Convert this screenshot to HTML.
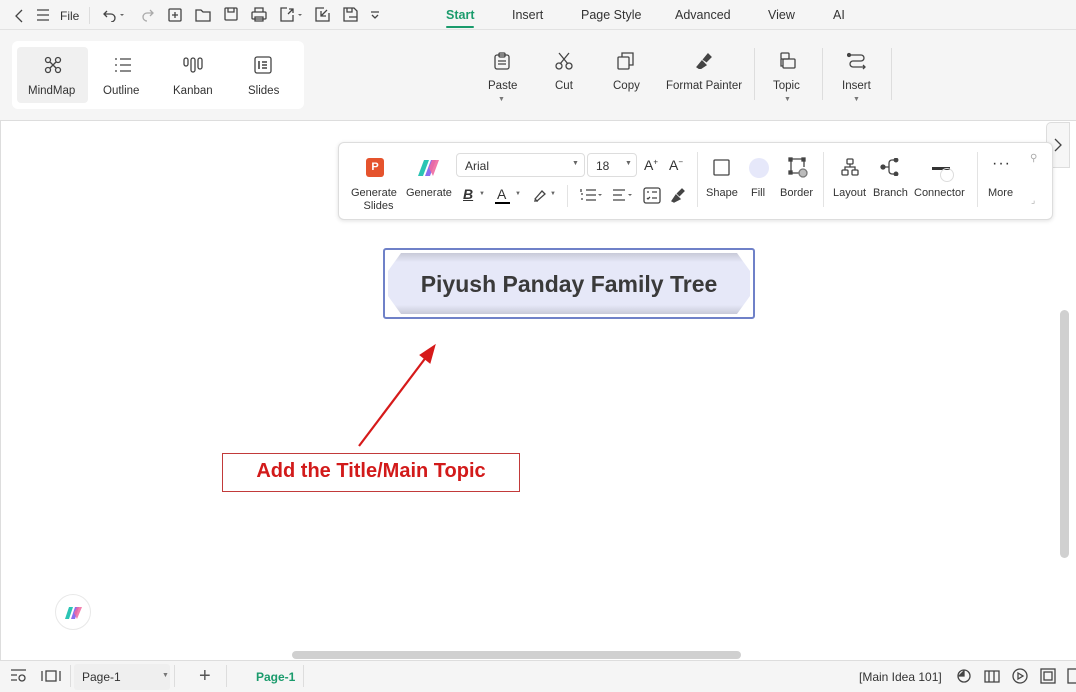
<!DOCTYPE html>
<html><head><meta charset="utf-8"><style>
*{margin:0;padding:0;box-sizing:border-box}
body{width:1076px;height:692px;overflow:hidden;background:#f5f5f5;font-family:"Liberation Sans",sans-serif;color:#333;position:relative;font-size:12px}
.a{position:absolute}
.t{position:absolute;font-size:11.5px;color:#333;white-space:nowrap}
svg{position:absolute;fill:none;stroke:#444;stroke-width:1.3}
.sep{position:absolute;width:1px;background:#ddd}
</style></head><body>
<!-- top bar -->
<div class="a" style="left:0;top:29px;width:1076px;height:1px;background:#e2e2e2"></div>
<svg style="left:12px;top:8px" width="14" height="16"><path d="M10 2L4 8l6 6"/></svg>
<svg style="left:37px;top:9px" width="12" height="12"><path d="M0 1h12M0 6h12M0 11h12"/></svg>
<div class="t" style="left:60px;top:9px;font-size:12px">File</div>
<div class="sep" style="left:89px;top:7px;height:17px"></div>
<svg style="left:103px;top:8px" width="22" height="14"><path d="M4 3L1 6l3 3M1 6h7a4 4 0 010 8" /><path d="M17 6l2 2 2-2" fill="#666" stroke="none"/></svg>
<svg style="left:140px;top:8px" width="14" height="14"><path d="M10 2l3 3-3 3M13 5H7a4 4 0 000 8" stroke="#aaa"/></svg>
<svg style="left:168px;top:8px" width="14" height="14"><rect x="1" y="1" width="12" height="12" rx="1"/><path d="M7 4v6M4 7h6"/></svg>
<svg style="left:195px;top:8px" width="16" height="14"><path d="M1 2h5l2 2h7v9H1z"/></svg>
<svg style="left:224px;top:7px" width="14" height="14"><rect x="1" y="1" width="12" height="12" rx="1"/><path d="M4 1v4h6V1"/></svg>
<svg style="left:251px;top:7px" width="16" height="15"><rect x="1" y="5" width="14" height="7" rx="1"/><path d="M4 5V1h8v4M4 10h8v4H4z"/></svg>
<svg style="left:280px;top:7px" width="26" height="15"><path d="M7 1H1v13h12V8M8 7l5-5M9 2h4v4"/><path d="M18 7l2 2 2-2" fill="#666" stroke="none"/></svg>
<svg style="left:315px;top:7px" width="15" height="15"><path d="M9 1H1v13h13V6M6 4v5h5M6 9l6-6"/></svg>
<svg style="left:343px;top:7px" width="15" height="15"><path d="M1 1h10l3 3v10H1zM4 1v4h5V1M6 10h8"/></svg>
<svg style="left:370px;top:10px" width="10" height="10"><path d="M1 2h8M2 5l3 3 3-3"/></svg>
<div class="t" style="left:446px;top:8px;font-size:12.5px;color:#1a9b6c;font-weight:bold">Start</div>
<div class="a" style="left:446px;top:26px;width:28px;height:2px;background:#1a9b6c;border-radius:1px"></div>
<div class="t" style="left:512px;top:8px;font-size:12.5px">Insert</div>
<div class="t" style="left:581px;top:8px;font-size:12.5px">Page Style</div>
<div class="t" style="left:675px;top:8px;font-size:12.5px">Advanced</div>
<div class="t" style="left:768px;top:8px;font-size:12.5px">View</div>
<div class="t" style="left:833px;top:8px;font-size:12.5px">AI</div>
<!-- view modes -->
<div class="a" style="left:12px;top:41px;width:292px;height:68px;background:#fff;border-radius:6px"></div>
<div class="a" style="left:17px;top:47px;width:71px;height:56px;background:#f0f0f0;border-radius:4px"></div>
<svg style="left:44px;top:56px" width="18" height="18"><circle cx="4" cy="4" r="2.5"/><circle cx="14" cy="4" r="2.5"/><circle cx="4" cy="14" r="2.5"/><circle cx="14" cy="14" r="2.5"/><path d="M6 6l6 6M12 6l-6 6"/></svg>
<div class="t" style="left:28px;top:85px">MindMap</div>
<svg style="left:114px;top:57px" width="18" height="16"><path d="M1 2h2M6 2h11M1 8h2M6 8h11M1 14h2M6 14h11"/></svg>
<div class="t" style="left:103px;top:85px">Outline</div>
<svg style="left:183px;top:57px" width="20" height="16"><rect x="1" y="1" width="4" height="8" rx="2"/><rect x="8" y="1" width="4" height="14" rx="2"/><rect x="15" y="1" width="4" height="11" rx="2"/></svg>
<div class="t" style="left:173px;top:85px">Kanban</div>
<svg style="left:254px;top:56px" width="18" height="18"><rect x="1" y="1" width="16" height="16" rx="2"/><path d="M5 5v8M8 6h5M8 9h5M8 12h5" stroke-width="1.6"/></svg>
<div class="t" style="left:248px;top:85px">Slides</div>
<!-- ribbon -->
<svg style="left:494px;top:52px" width="16" height="18"><rect x="1" y="3" width="14" height="14" rx="2"/><rect x="5" y="1" width="6" height="4" rx="1"/><path d="M4 9h8M4 12h8"/></svg>
<div class="t" style="left:488px;top:80px">Paste</div>
<div class="t" style="left:498px;top:96px;font-size:7px;color:#777">▼</div>
<svg style="left:555px;top:52px" width="18" height="18"><circle cx="4" cy="14" r="3"/><circle cx="14" cy="14" r="3"/><path d="M5 12L14 1M13 12L4 1"/></svg>
<div class="t" style="left:555px;top:80px">Cut</div>
<svg style="left:617px;top:52px" width="18" height="18"><rect x="1" y="5" width="11" height="12" rx="1"/><path d="M5 5V1h11v12h-4"/></svg>
<div class="t" style="left:613px;top:80px">Copy</div>
<svg style="left:694px;top:51px" width="18" height="18"><path d="M3 16l5-6 4 4-6 4zM9 9l5-6 3 3-5 5" fill="#444"/></svg>
<div class="t" style="left:666px;top:80px">Format Painter</div>
<div class="sep" style="left:754px;top:48px;height:52px"></div>
<svg style="left:779px;top:52px" width="18" height="18"><rect x="2" y="1" width="8" height="6" rx="1"/><rect x="4" y="7" width="12" height="9" rx="1"/><path d="M2 7v7h2"/></svg>
<div class="t" style="left:773px;top:80px">Topic</div>
<div class="t" style="left:784px;top:96px;font-size:7px;color:#777">▼</div>
<div class="sep" style="left:822px;top:48px;height:52px"></div>
<svg style="left:847px;top:52px" width="20" height="18"><path d="M2 3h12a3 3 0 010 6H6a3 3 0 000 6h12M16 13l2 2-2 2"/><circle cx="2" cy="3" r="1.5" fill="#444"/></svg>
<div class="t" style="left:842px;top:80px">Insert</div>
<div class="t" style="left:853px;top:96px;font-size:7px;color:#777">▼</div>
<div class="sep" style="left:891px;top:48px;height:52px"></div>
<!-- canvas -->
<div class="a" style="left:0;top:120px;width:1076px;height:540px;background:#fff;border-top:1px solid #ddd;border-left:1px solid #ddd"></div>
<div class="a" style="left:1046px;top:122px;width:24px;height:46px;background:#f6f6f6;border:1px solid #ddd;border-radius:5px 0 0 5px"></div>
<svg style="left:1053px;top:138px" width="10" height="14"><path d="M2 1l6 6-6 6"/></svg>
<div class="a" style="left:1060px;top:310px;width:9px;height:248px;background:#d0d0d0;border-radius:5px"></div>
<div class="a" style="left:292px;top:651px;width:449px;height:8px;background:#d0d0d0;border-radius:4px"></div>
<!-- floating toolbar -->
<div class="a" style="left:338px;top:142px;width:715px;height:78px;background:#fff;border:1px solid #ddd;border-radius:6px;box-shadow:0 1px 4px rgba(0,0,0,.12)"></div>
<div class="a" style="left:366px;top:158px;width:18px;height:19px;background:#e5532d;border-radius:3px;color:#fff;font-weight:bold;font-size:11px;text-align:center;line-height:19px">P</div>
<div class="t" style="left:351px;top:187px;font-size:11px;text-align:center;line-height:13px">Generate<br>&nbsp;&nbsp;&nbsp;Slides</div>
<svg style="left:416px;top:158px;stroke:none" width="26" height="20"><path d="M2 18L8 2h5L7 18z" fill="#2bc4b4"/><path d="M9 18L15 2h5l-6 16z" fill="#8a6ef0"/><path d="M13 10l3-8h7l-6 16z" fill="#f06aa0" opacity=".9"/></svg>
<div class="t" style="left:406px;top:187px;font-size:11px">Generate</div>
<div class="a" style="left:456px;top:153px;width:129px;height:24px;border:1px solid #ddd;border-radius:4px"></div>
<div class="t" style="left:465px;top:159px;font-size:12px">Arial</div>
<div class="t" style="left:572px;top:160px;font-size:7px;color:#666">▼</div>
<div class="a" style="left:587px;top:153px;width:50px;height:24px;border:1px solid #ddd;border-radius:4px"></div>
<div class="t" style="left:596px;top:159px;font-size:12px">18</div>
<div class="t" style="left:625px;top:160px;font-size:7px;color:#666">▼</div>
<div class="t" style="left:644px;top:157px;font-size:14px">A<sup style="font-size:8px">+</sup></div>
<div class="t" style="left:669px;top:157px;font-size:14px">A<sup style="font-size:8px">−</sup></div>
<div class="t" style="left:463px;top:186px;font-size:14px;font-style:italic;font-weight:bold;text-decoration:underline">B</div>
<div class="t" style="left:479px;top:191px;font-size:6px;color:#666">▼</div>
<div class="t" style="left:497px;top:186px;font-size:14px">A</div>
<div class="a" style="left:495px;top:202px;width:15px;height:2px;background:#000"></div>
<div class="t" style="left:515px;top:191px;font-size:6px;color:#666">▼</div>
<svg style="left:532px;top:188px" width="14" height="14"><path d="M3 11l7-8 3 3-8 7zM2 13h4"/></svg>
<div class="t" style="left:550px;top:191px;font-size:6px;color:#666">▼</div>
<div class="sep" style="left:567px;top:185px;height:22px;background:#e3e3e3"></div>
<svg style="left:580px;top:188px" width="22" height="14"><path d="M6 2h10M6 7h10M6 12h10M1 1v3M1 6h2M1 11h2"/><path d="M18 6l2 2 2-2" fill="#666" stroke="none"/></svg>
<svg style="left:612px;top:188px" width="24" height="14"><path d="M1 2h12M1 7h9M1 12h12"/><path d="M16 6l2 2 2-2" fill="#666" stroke="none"/></svg>
<svg style="left:643px;top:187px" width="18" height="17"><rect x="1" y="1" width="16" height="15" rx="2"/><path d="M4 5h2M9 5h5M4 11l1 1 2-2M9 11h5"/></svg>
<svg style="left:670px;top:187px" width="16" height="16"><path d="M2 14l4-6 4 4-6 3zM7 7l5-5 2 2-5 5" fill="#444"/></svg>
<div class="sep" style="left:697px;top:152px;height:55px;background:#e3e3e3"></div>
<svg style="left:712px;top:158px" width="19" height="19"><rect x="2" y="2" width="15" height="15" rx="1"/></svg>
<div class="t" style="left:706px;top:187px;font-size:11px">Shape</div>
<div class="a" style="left:749px;top:158px;width:20px;height:20px;border-radius:50%;background:#e6e8fa"></div>
<div class="t" style="left:751px;top:187px;font-size:11px">Fill</div>
<svg style="left:787px;top:157px" width="22" height="22"><path d="M4 2v14h10M4 2h13v8"/><rect x="2" y="1" width="3" height="3" fill="#444"/><rect x="15" y="1" width="3" height="3" fill="#444"/><rect x="2" y="14" width="3" height="3" fill="#444"/><circle cx="16" cy="16" r="4" fill="#bbb" stroke="#777"/></svg>
<div class="t" style="left:780px;top:187px;font-size:11px">Border</div>
<div class="sep" style="left:823px;top:152px;height:55px;background:#e3e3e3"></div>
<svg style="left:841px;top:158px" width="18" height="18"><rect x="6" y="1" width="6" height="5" rx="1"/><rect x="1" y="12" width="6" height="5" rx="1"/><rect x="11" y="12" width="6" height="5" rx="1"/><path d="M9 6v3H4v3M9 9h5v3"/></svg>
<div class="t" style="left:833px;top:187px;font-size:11px">Layout</div>
<svg style="left:880px;top:158px" width="20" height="18"><circle cx="3" cy="9" r="2" fill="#444"/><path d="M5 9h4M14 2h-2a3 3 0 00-3 3v8a3 3 0 003 3h2"/><circle cx="16" cy="2" r="1.8" fill="#444"/><circle cx="16" cy="16" r="1.8" fill="#444"/></svg>
<div class="t" style="left:873px;top:187px;font-size:11px">Branch</div>
<div class="a" style="left:932px;top:167px;width:18px;height:3px;background:#333"></div>
<div class="a" style="left:940px;top:168px;width:14px;height:14px;border:1px solid #ddd;border-radius:50%"></div>
<div class="t" style="left:914px;top:187px;font-size:11px">Connector</div>
<div class="sep" style="left:977px;top:152px;height:55px;background:#e3e3e3"></div>
<div class="t" style="left:992px;top:155px;font-size:16px;letter-spacing:1px">···</div>
<div class="t" style="left:988px;top:187px;font-size:11px">More</div>
<div class="t" style="left:1030px;top:153px;font-size:10px;color:#aaa">⚲</div>
<div class="t" style="left:1031px;top:195px;font-size:9px;color:#aaa">⌟</div>
<!-- main topic -->
<div class="a" style="left:383px;top:248px;width:372px;height:71px;border:2px solid #6f81c8;border-radius:3px"></div>
<svg style="left:387px;top:252px;stroke:none" width="364" height="63"><defs><linearGradient id="g" x1="0" y1="0" x2="0" y2="1"><stop offset="0" stop-color="#c8cad8"/><stop offset=".15" stop-color="#e6e8f8"/><stop offset=".85" stop-color="#e6e8f8"/><stop offset="1" stop-color="#c8cad8"/></linearGradient></defs><path d="M14 1h336l13 18v25l-13 18H14L1 44V19z" fill="url(#g)"/></svg>
<div class="t" style="left:387px;top:271px;width:364px;text-align:center;font-size:23px;font-weight:bold;color:#3a3a3a">Piyush Panday Family Tree</div>
<!-- annotation -->
<svg style="left:350px;top:340px" width="100" height="110"><path d="M9 106L80 12" stroke="#d61a1a" stroke-width="2.2"/><path d="M85 5L70 15l10 8z" fill="#d61a1a" stroke="#d61a1a" stroke-width="1"/></svg>
<div class="a" style="left:222px;top:453px;width:298px;height:39px;border:1px solid #c23a3a;background:#fff"></div>
<div class="t" style="left:222px;top:460px;width:298px;text-align:center;font-size:20px;font-weight:bold;color:#d21a1a">Add the Title/Main Topic</div>
<!-- AI bubble -->
<div class="a" style="left:55px;top:594px;width:36px;height:36px;border:1px solid #e8e8e8;border-radius:50%;background:#fff"></div>
<svg style="left:64px;top:605px;stroke:none" width="20" height="15"><path d="M1 14L5 2h4L5 14z" fill="#2bc4b4"/><path d="M7 14L11 2h4l-4 12z" fill="#8a6ef0"/><path d="M10 8l3-6h5l-5 12z" fill="#f06aa0" opacity=".85"/></svg>
<!-- bottom bar -->
<div class="a" style="left:0;top:660px;width:1076px;height:32px;background:#f5f5f5;border-top:1px solid #ddd"></div>
<svg style="left:10px;top:669px" width="18" height="14"><path d="M1 1h15M1 6h6M1 11h6"/><circle cx="12" cy="9" r="3"/></svg>
<svg style="left:41px;top:670px" width="20" height="12"><path d="M1 1v10M19 1v10"/><rect x="5" y="1" width="10" height="10"/></svg>
<div class="sep" style="left:70px;top:665px;height:22px"></div>
<div class="a" style="left:74px;top:664px;width:96px;height:26px;background:#efefef;border-radius:3px"></div>
<div class="t" style="left:82px;top:670px;font-size:12px">Page-1</div>
<div class="t" style="left:162px;top:672px;font-size:7px;color:#777">▼</div>
<div class="sep" style="left:174px;top:665px;height:22px"></div>
<div class="t" style="left:199px;top:665px;font-size:20px;font-weight:300;color:#555">+</div>
<div class="sep" style="left:226px;top:665px;height:22px"></div>
<div class="t" style="left:256px;top:670px;font-size:12px;color:#1a9b6c;font-weight:bold">Page-1</div>
<div class="sep" style="left:303px;top:665px;height:22px"></div>
<div class="t" style="left:859px;top:670px;font-size:12px">[Main Idea 101]</div>
<svg style="left:957px;top:669px" width="14" height="14"><circle cx="7" cy="7" r="6"/><path d="M1 7h6V1" fill="#444"/></svg>
<svg style="left:984px;top:669px" width="16" height="14"><path d="M1 2l4 0 5 0 5 0v11H1zM5 2v11M10 2v11"/></svg>
<svg style="left:1012px;top:668px" width="16" height="16"><circle cx="8" cy="8" r="7"/><path d="M6 5l5 3-5 3z"/></svg>
<svg style="left:1040px;top:668px" width="16" height="16"><rect x="1" y="1" width="14" height="14"/><rect x="4" y="4" width="8" height="8"/></svg>
<svg style="left:1067px;top:668px" width="10" height="16"><rect x="1" y="1" width="12" height="14"/></svg>
</body></html>
